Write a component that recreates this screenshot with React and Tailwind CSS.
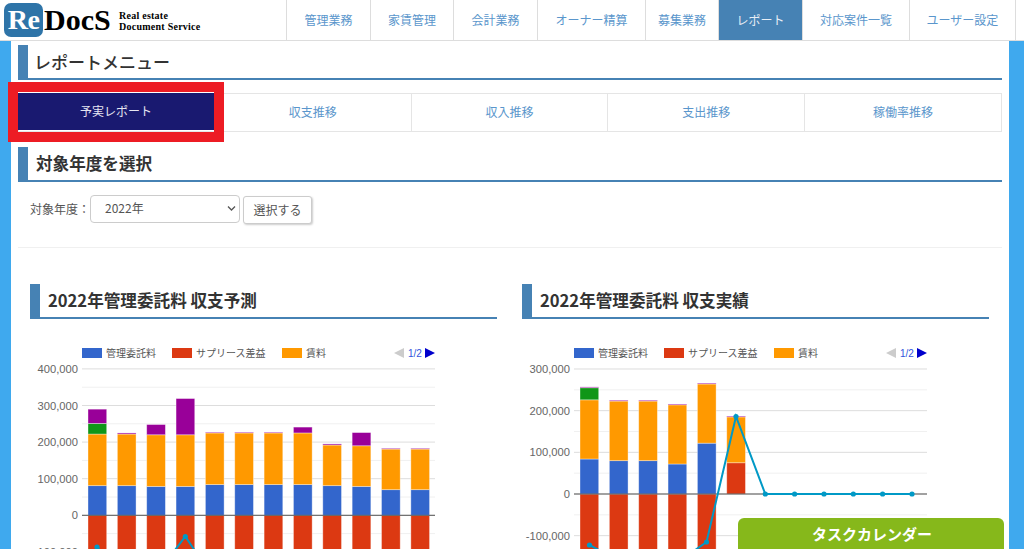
import React from "react";

const JP = '"Noto Sans CJK JP","Liberation Sans",sans-serif';
const navItems = [
  ["管理業務", "w-[84px]"],
  ["家賃管理", "w-[83px]"],
  ["会計業務", "w-[84px]"],
  ["オーナー精算", "w-[108px]"],
  ["募集業務", "w-[73px]"],
  ["レポート", "w-[84px]"],
  ["対応案件一覧", "w-[107px]"],
  ["ユーザー設定", "w-[107px]"],
];
const tabs = ["予実レポート", "収支推移", "収入推移", "支出推移", "稼働率推移"];

const C = { blue: "#3366cc", red: "#dc3912", orange: "#ff9900", green: "#109618", purple: "#990099" };

function Seg({ x, y0, v0, v1, k, fill, w = 18.7 }) {
  const top = y0 - v1 * k;
  const bottom = y0 - v0 * k;
  return <rect x={x} y={top} width={w} height={bottom - top} fill={fill} stroke="#fff" strokeOpacity="0.45" strokeWidth="0.8" />;
}

function Chart({ ox, labels, y0, k, minor, bars, line }) {
  const plotL = ox + 52;
  const plotR = ox + 405;
  return (
    <svg className="block" width="467" height="300" viewBox={`${ox} 330 467 300`}>
      <g fontFamily={JP} fontSize="10" fill="#555">
        <rect x={plotL} y="348" width="20" height="10" fill={C.blue} />
        <text x={plotL + 24} y="357">管理委託料</text>
        <rect x={plotL + 90} y="348" width="20" height="10" fill={C.red} />
        <text x={plotL + 114} y="357">サプリース差益</text>
        <rect x={plotL + 200} y="348" width="20" height="10" fill={C.orange} />
        <text x={plotL + 224} y="357">賃料</text>
      </g>
      <polygon points={`${plotL + 312},353 ${plotL + 322},348 ${plotL + 322},358`} fill="#ccc" />
      <text x={plotL + 326} y="357" fontSize="10" fill="#3355dd" fontFamily='"Liberation Sans",sans-serif'>1/2</text>
      <polygon points={`${plotL + 343},348 ${plotL + 353},353 ${plotL + 343},358`} fill="#0000cc" />
      {minor.map((v) => (
        <line key={v} x1={plotL} x2={plotR} y1={y0 - v * k} y2={y0 - v * k} stroke="#f0f0f0" />
      ))}
      {labels.map((v) => (
        <g key={v}>
          <line x1={plotL} x2={plotR} y1={y0 - v * k} y2={y0 - v * k} stroke="#ddd" />
          <text x={plotL - 4} y={y0 - v * k + 4} textAnchor="end" fontSize="11.2" fill="#666" fontFamily='"Liberation Sans",sans-serif'>
            {v === 0 ? "0" : (v * 1000).toLocaleString("en-US")}
          </text>
        </g>
      ))}
      {bars.map((b, i) => {
        const x = plotL + 6 + i * 29.35;
        return (
          <g key={i}>
            {b.neg && <rect x={x} y={y0} width="18.7" height="120" fill={C.red} stroke="#fff" strokeOpacity="0.45" strokeWidth="0.8" />}
            {b.s.map(([a, c, col], j) => (
              <Seg key={j} x={x} y0={y0} v0={a} v1={c} k={k} fill={col} />
            ))}
          </g>
        );
      })}
      <line x1={plotL} x2={plotR} y1={y0} y2={y0} stroke="#555" strokeWidth="1" />
      <polyline points={line.map((p) => p.join(",")).join(" ")} fill="none" stroke="#0099c6" strokeWidth="2" />
      {line.map((p, i) => (
        <circle key={i} cx={p[0]} cy={p[1]} r="2.6" fill="#0099c6" />
      ))}
    </svg>
  );
}

const stack = (b, o, p, g) => {
  const s = [
    [0, b, C.blue],
    [b, o, C.orange],
  ];
  if (g) {
    s.push([o, g, C.green]);
    s.push([g, p, C.purple]);
  } else s.push([o, p, C.purple]);
  return { neg: true, s };
};

const bars1 = [
  stack(81, 222, 290, 251),
  stack(81, 222, 225),
  stack(79, 220, 248),
  stack(79, 220, 319),
  stack(84, 225, 227),
  stack(84, 225, 227),
  stack(84, 225, 227),
  stack(84, 225, 241),
  stack(81, 192, 195),
  stack(79, 190, 226),
  stack(70, 181, 183),
  stack(70, 181, 183),
];
const bars2 = [
  stack(84, 226, 257, 255),
  stack(80, 223, 225),
  stack(80, 223, 225),
  stack(72, 214, 216),
  stack(122, 264, 266),
  { neg: false, s: [[0, 75, C.red], [75, 185, C.orange], [185, 187, C.purple]] },
];
const line1 = [[97, 547], [126.5, 580], [156, 575], [185.3, 536.5], [214.5, 580], [244, 585]];
const line2 = [
  [589.5, 545], [619, 561], [648, 570], [677, 563], [706.5, 542], [736, 416.5],
  [765.3, 494], [794.6, 494], [824, 494], [853.3, 494], [882.6, 494], [912, 494],
];

function Title({ children, strong }) {
  return (
    <div className="h-[35px] border-l-[10px] border-b-2 border-[#4682b4] pl-2 pb-px flex items-center">
      <h2 className={`leading-none text-[#333] ${strong ? "text-[16.6px] font-bold" : "text-[17px] font-medium -ml-[2px]"}`}>{children}</h2>
    </div>
  );
}

export default function App() {
  return (
    <div className="relative w-[1024px] h-[549px] overflow-hidden bg-white" style={{ fontFamily: JP }}>
      <header className="h-[41px] flex justify-between border-b border-[#ddd]">
        <div className="flex items-center pl-1 h-[40px]">
          <div className="w-[39px] h-[34px] rounded-[7px] bg-[#2e74a8] flex items-center justify-center">
            <span className="text-white font-bold text-[28px] leading-none tracking-[-0.5px]" style={{ fontFamily: '"Liberation Serif",serif' }}>Re</span>
          </div>
          <span className="ml-px text-black font-bold text-[30px] leading-none w-[75px]" style={{ fontFamily: '"Liberation Serif",serif' }}>DocS</span>
          <div className="text-black font-bold text-[10px] leading-[11px] tracking-[0.25px] pt-px" style={{ fontFamily: '"Liberation Serif",serif' }}>
            <div>Real estate</div>
            <div>Document Service</div>
          </div>
        </div>
        <nav className="flex pr-2">
          {navItems.map(([t, w], i) => (
            <div
              key={t}
              className={`${w} h-[40px] flex items-center justify-center text-[12px] border-l border-[#ddd] ${i === 7 ? "border-r" : ""} ${t === "レポート" ? "bg-[#4682b4] text-[#e8eef5]" : "text-[#5a96cc]"}`}
            >
              {t}
            </div>
          ))}
        </nav>
      </header>

      <div className="flex h-[508px]">
        <div className="w-[11px] bg-[#3fa9ee] shrink-0" />
        <main className="w-[998px] pl-[7px] pr-[7px] pt-[4px]">
          <Title>レポートメニュー</Title>
          <div className="mt-[13px] h-[39px] flex border border-[#e5e5e5] text-[12px]">
            {tabs.map((t, i) => (
              <div
                key={t}
                className={`flex-1 flex items-center justify-center pb-[2px] ${i > 0 ? "border-l border-[#e5e5e5] text-[#5a96cc]" : "bg-[#191970] text-[#e6e6f2] -mt-px mb-px -ml-px"}`}
              >
                {t}
              </div>
            ))}
          </div>
          <div className="mt-[15px]">
            <Title strong>対象年度を選択</Title>
          </div>
          <div className="mt-[12px] pl-[12px] flex items-center text-[12px] text-[#555]">
            <span className="w-[60px] pb-px">対象年度：</span>
            <div className="relative w-[150px] h-[28px]">
              <select className="appearance-none w-full h-full rounded-[4px] border border-[#ccc] bg-white pl-[14px] pb-[2px] text-[12px] text-[#555]">
                <option>2022年</option>
              </select>
              <svg className="absolute right-[4px] top-[10px]" width="9" height="7" viewBox="0 0 9 7">
                <path d="M1 1.5 L4.5 5 L8 1.5" fill="none" stroke="#555" strokeWidth="1.3" />
              </svg>
            </div>
            <button className="ml-[3px] w-[69px] h-[28px] mt-[2px] rounded-[3px] border border-[#ccc] bg-white shadow-[1px_1px_2px_rgba(0,0,0,0.2)] pb-px text-[12px] text-[#555]">
              選択する
            </button>
          </div>
          <div className="mt-[23px] border-t border-[#f0f0f0]" />
          <section className="mt-[36px] pl-[12px] grid grid-cols-[467px_467px] gap-x-[25px]">
            <div>
              <Title strong>2022年管理委託料 収支予測</Title>
              <div className="mt-[11px]">
                <Chart ox={30} labels={[400, 300, 200, 100, 0, -100]} minor={[350, 250, 150, 50, -50]} y0={515.3} k={0.366} bars={bars1} line={line1} />
              </div>
            </div>
            <div>
              <Title strong>2022年管理委託料 収支実績</Title>
              <div className="mt-[11px]">
                <Chart ox={522} labels={[300, 200, 100, 0, -100]} minor={[250, 150, 50, -50]} y0={494} k={0.4167} bars={bars2} line={line2} />
              </div>
            </div>
          </section>
        </main>
        <div className="w-[15px] bg-[#3fa9ee] shrink-0" />
      </div>

      <div className="absolute left-[8px] top-[82px] w-[216px] h-[60px] border-[10px] border-[#ed1c24]" />
      <div className="absolute left-[738px] top-[518px] w-[266px] h-[40px] rounded-t-[6px] bg-[#86b81b] text-white font-bold text-[15px] text-center pt-[6px] pl-[2px] leading-[20px]">
        タスクカレンダー
      </div>
    </div>
  );
}
